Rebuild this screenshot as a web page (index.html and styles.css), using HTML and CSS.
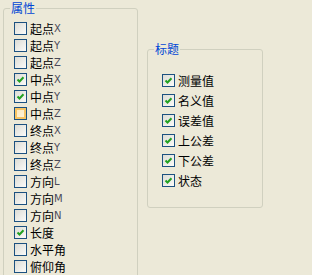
FILE: index.html
```html
<!DOCTYPE html>
<html>
<head>
	<meta charset="utf-8">
	<link rel="stylesheet" href="styles.css">
</head>
<body>
	<div class="panel">
		<div class="group attrs">
			<span class="legend">属性</span>
			<ul class="list">
				<li><span class="box"></span>起点<span class="en">X</span></li>
				<li><span class="box"></span>起点<span class="en">Y</span></li>
				<li><span class="box"></span>起点<span class="en">Z</span></li>
				<li><span class="box"><svg viewBox="0 0 11 11"><path d="M2.5 5.5 L4.5 7.5 L8.5 3.2"/></svg></span>中点<span class="en">X</span></li>
				<li><span class="box"><svg viewBox="0 0 11 11"><path d="M2.5 5.5 L4.5 7.5 L8.5 3.2"/></svg></span>中点<span class="en">Y</span></li>
				<li><span class="box hot"></span>中点<span class="en">Z</span></li>
				<li><span class="box"></span>终点<span class="en">X</span></li>
				<li><span class="box"></span>终点<span class="en">Y</span></li>
				<li><span class="box"></span>终点<span class="en">Z</span></li>
				<li><span class="box"></span>方向<span class="en">L</span></li>
				<li><span class="box"></span>方向<span class="en">M</span></li>
				<li><span class="box"></span>方向<span class="en">N</span></li>
				<li><span class="box"><svg viewBox="0 0 11 11"><path d="M2.5 5.5 L4.5 7.5 L8.5 3.2"/></svg></span>长度</li>
				<li><span class="box"></span>水平角</li>
				<li><span class="box"></span>俯仰角</li>
			</ul>
		</div>
		<div class="group titles">
			<span class="legend">标题</span>
			<ul class="list">
				<li><span class="box"><svg viewBox="0 0 11 11"><path d="M2.5 5.5 L4.5 7.5 L8.5 3.2"/></svg></span>测量值</li>
				<li><span class="box"><svg viewBox="0 0 11 11"><path d="M2.5 5.5 L4.5 7.5 L8.5 3.2"/></svg></span>名义值</li>
				<li><span class="box"><svg viewBox="0 0 11 11"><path d="M2.5 5.5 L4.5 7.5 L8.5 3.2"/></svg></span>误差值</li>
				<li><span class="box"><svg viewBox="0 0 11 11"><path d="M2.5 5.5 L4.5 7.5 L8.5 3.2"/></svg></span>上公差</li>
				<li><span class="box"><svg viewBox="0 0 11 11"><path d="M2.5 5.5 L4.5 7.5 L8.5 3.2"/></svg></span>下公差</li>
				<li><span class="box"><svg viewBox="0 0 11 11"><path d="M2.5 5.5 L4.5 7.5 L8.5 3.2"/></svg></span>状态</li>
			</ul>
		</div>
	</div>
</body>
</html>
```

FILE: styles.css
```css
html, body {
	margin: 0;
	height: 100%;
	overflow: hidden;
	background: #ece9d8;
}

body {
	font-family: "Noto Sans CJK SC", "DejaVu Sans", sans-serif;
	font-size: 12px;
	color: #000;
}

.panel {
	display: flex;
	align-items: flex-start;
	padding: 8px 0 0 3px;
}

.group {
	position: relative;
	box-sizing: border-box;
	border: 1px solid #d0d0bf;
	border-radius: 3px;
}

.group.attrs {
	width: 135px;
	height: 300px;
	padding: 11px 0 0 10px;
}

.group.titles {
	width: 116px;
	height: 159px;
	margin: 41px 0 0 9px;
	padding: 20px 0 0 14px;
}

.legend {
	position: absolute;
	top: -9px;
	left: 6px;
	padding: 0 1px;
	background: #ece9d8;
	color: #0046d5;
	line-height: 16px;
}

ul.list {
	list-style-type: none;
	margin: 0;
	padding: 0;
}

ul.list li {
	display: flex;
	align-items: center;
	height: 17px;
	line-height: 17px;
	white-space: nowrap;
}

.titles ul.list li {
	height: 20px;
}

.en {
	font-family: "DejaVu Sans", sans-serif;
	font-size: 10px;
	color: #4a4a58;
}

.box {
	box-sizing: border-box;
	width: 13px;
	height: 13px;
	margin-right: 3px;
	border: 1px solid #1c5180;
	background: linear-gradient(135deg, #dcdcd5, #fbfbf9);
	flex-shrink: 0;
}

.box svg {
	display: block;
	width: 11px;
	height: 11px;
}

.box svg path {
	fill: none;
	stroke: #21a121;
	stroke-width: 2;
}

.box.hot {
	box-shadow: inset 0 0 0 2px #f8c462;
	background: linear-gradient(135deg, #fde6b4, #fff6e2);
}
```
